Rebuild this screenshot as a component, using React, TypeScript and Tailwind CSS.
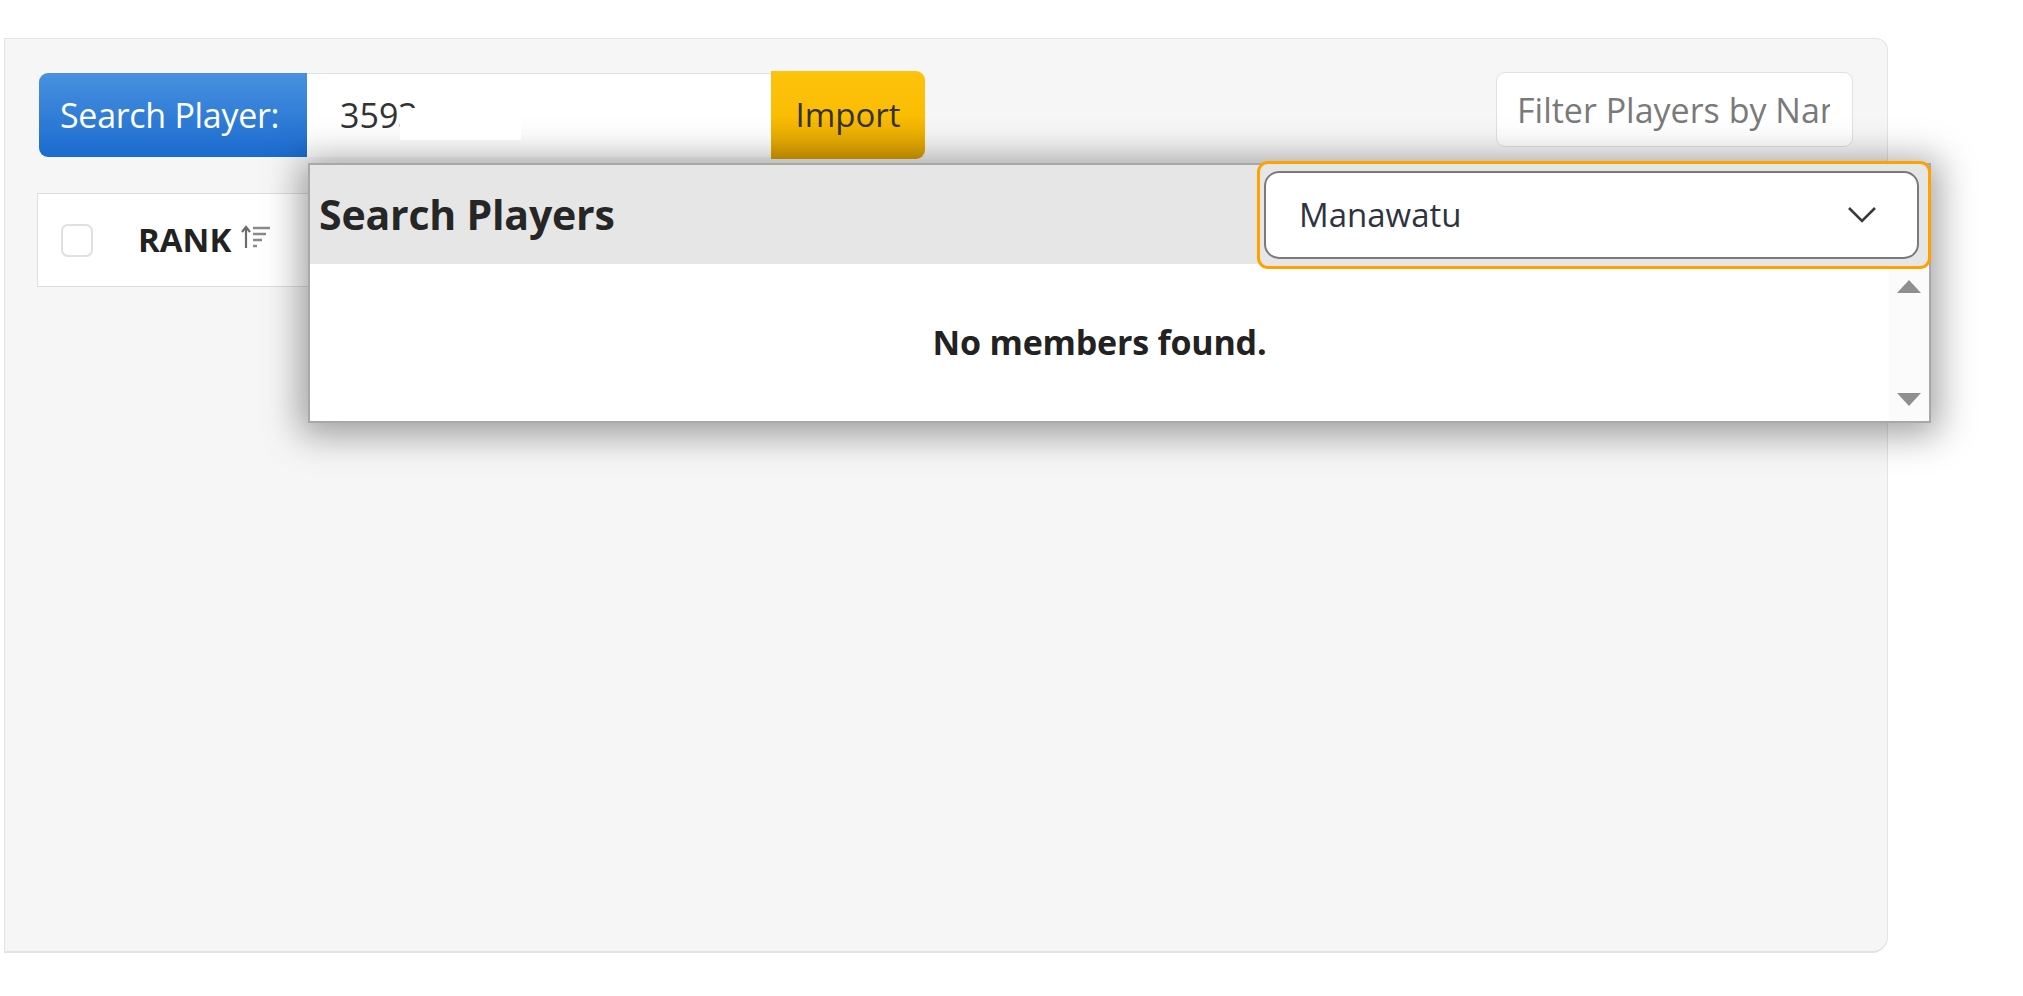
import React from "react";

function SortIcon() {
    return (
        <svg width="30" height="24" viewBox="0 0 30 24" fill="none">
            <path d="M5 23V3" stroke="#6b6b6b" strokeWidth="2.2" />
            <path d="M1 7l4-5 4 5" stroke="#6b6b6b" strokeWidth="2.2" fill="none" />
            <path d="M12 3h17M12 9h13M12 15h9M12 21h4" stroke="#8a8a8a" strokeWidth="2.4" />
        </svg>
    );
}

function Chevron() {
    return (
        <svg width="30" height="18" viewBox="0 0 30 18" fill="none">
            <polyline points="2,2 15,15 28,2" stroke="#3a3a3a" strokeWidth="2.6" fill="none" />
        </svg>
    );
}

export default function App() {
    return (
        <div className="relative w-[2023px] h-[996px] bg-white overflow-hidden font-['Open_Sans',sans-serif]">
            <div className="ml-[4px] mt-[38px] w-[1884px] h-[915px] bg-[#f6f6f6] border border-[#e3e3e3] border-b-2 rounded-tr-[12px] rounded-br-[16px] px-[34px] pt-[32px]">
                <div className="flex items-start justify-between">
                    <div className="flex items-center">
                        <div className="w-[268px] h-[84px] rounded-l-[9px] bg-gradient-to-b from-[#4791df] to-[#1a6bcf] text-white text-[34px] flex items-center pl-[21px] tracking-[-0.3px]">
                            Search Player:
                        </div>
                        <div className="w-[464px] h-[84px] bg-white border-t border-[#e2e2e2] text-[#333] text-[34px] flex items-center pl-[33px]">
                            3593
                        </div>
                        <button className="w-[154px] h-[88px] rounded-r-[9px] bg-gradient-to-b from-[#fec30c] via-[#fbbd04] to-[#dba000] text-[#333] text-[33px]">
                            Import
                        </button>
                    </div>
                    <input
                        placeholder="Filter Players by Name"
                        className="mt-[1px] w-[357px] h-[75px] bg-white border border-[#e0e0e0] rounded-[9px] pl-[20px] pr-[22px] text-[34px] text-[#444] placeholder:text-[#7a7a7a] outline-none"
                    />
                </div>

                <div className="-ml-[2px] mt-[34px] w-[1818px] h-[94px] bg-white border border-[#dedede] flex items-center pl-[23px]">
                    <div className="w-[32px] h-[33px] rounded-[7px] border-2 border-[#e0e0e0] bg-white" />
                    <span className="ml-[45px] text-[33px] font-bold text-[#222]">RANK</span>
                    <span className="ml-[10px] -mt-[6px]"><SortIcon /></span>
                </div>
            </div>

            {/* redacted part of the search value */}
            <div className="absolute left-[400px] top-[108px] w-[121px] h-[32px] bg-white z-20" />

            <div className="absolute left-[308px] top-[163px] w-[1623px] h-[260px] bg-white border-2 border-[#a8a8a8] shadow-[0_4px_34px_8px_rgba(0,0,0,0.36)] z-10 flex flex-col">
                <div className="relative h-[99px] bg-[#e6e6e6] flex items-center pl-[9px]">
                    <h2 className="text-[41px] font-bold text-[#262626] tracking-[-0.2px]">Search Players</h2>
                    <div className="absolute -top-[4px] -right-[2px] w-[674px] h-[108px] border-[3px] border-[#ffa200] rounded-[11px] bg-[#e6e6e6] pl-[4px] pr-[9px] py-[7px]">
                        <div className="h-full bg-white border-2 border-[#7a7a7a] rounded-[15px] flex items-center justify-between pl-[33px] pr-[40px]">
                            <span className="text-[33px] text-[#2f3340]">Manawatu</span>
                            <Chevron />
                        </div>
                    </div>
                </div>
                <div className="flex-1 flex">
                    <div className="flex-1 flex items-center justify-center">
                        <p className="text-[34px] font-bold text-[#222] tracking-[-0.2px]">No members found.</p>
                    </div>
                    <div className="w-[40px] bg-[#fbfbfb] flex flex-col items-center justify-between pt-[16px] pb-[15px]">
                        <svg width="24" height="13" viewBox="0 0 24 13"><polygon points="12,0 24,13 0,13" fill="#8f8f8f" /></svg>
                        <svg width="24" height="13" viewBox="0 0 24 13"><polygon points="0,0 24,0 12,13" fill="#8f8f8f" /></svg>
                    </div>
                </div>
            </div>
        </div>
    );
}
